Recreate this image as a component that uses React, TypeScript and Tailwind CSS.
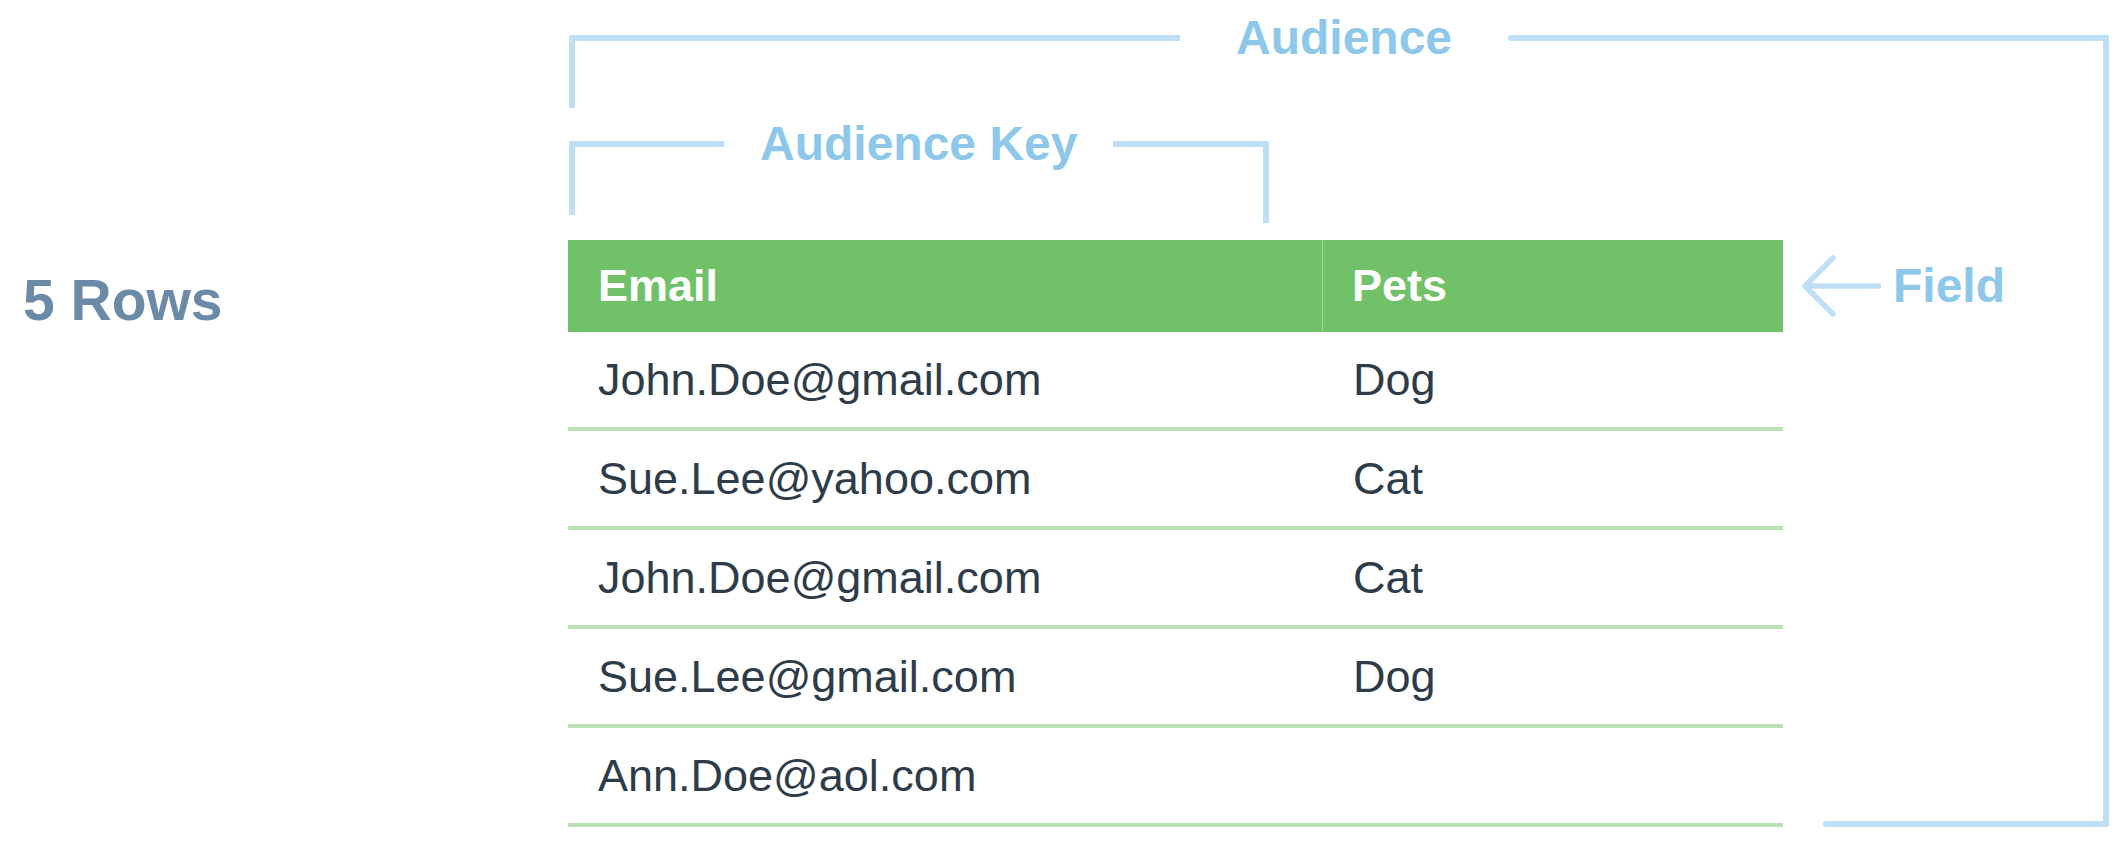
import { FunctionComponent } from "react";

const rows = [
  { email: "John.Doe@gmail.com", pet: "Dog" },
  { email: "Sue.Lee@yahoo.com", pet: "Cat" },
  { email: "John.Doe@gmail.com", pet: "Cat" },
  { email: "Sue.Lee@gmail.com", pet: "Dog" },
  { email: "Ann.Doe@aol.com", pet: "" },
];

const App: FunctionComponent = () => {
  return (
    <div className="w-full h-[842px] bg-white overflow-hidden flex flex-row items-start font-['Liberation_Sans',Arial,sans-serif]">
      {/* row count */}
      <div className="w-[568px] shrink-0 pt-[267px] pl-[23px]">
        <div className="text-[57px] leading-[66px] font-bold text-[#6a8aa8]">5 Rows</div>
      </div>

      {/* diagram */}
      <div className="flex flex-row items-start">
        <div className="w-[1535px] flex flex-col">
          {/* Audience bracket */}
          <div className="h-[108px] flex flex-row items-start">
            <div className="ml-[1px] mt-[35px] w-[611px] h-[73px] border-t-[6px] border-l-[6px] border-[#bfdff4] rounded-tl-[2px]" />
            <div className="mt-[10px] px-[56px] text-[48px] leading-[56px] font-bold text-[#8dc7ea]">Audience</div>
            <div className="mt-[35px] flex-1 h-[6px] bg-[#bfdff4] rounded-l-[3px]" />
          </div>

          {/* Audience Key bracket */}
          <div className="h-[132px] flex flex-row items-start">
            <div className="ml-[1px] mt-[33px] w-[155px] h-[74px] border-t-[6px] border-l-[6px] border-[#bfdff4] rounded-tl-[2px]" />
            <div className="mt-[8px] px-[36px] text-[48px] leading-[56px] font-bold text-[#8dc7ea]">Audience Key</div>
            <div className="mt-[33px] w-[156px] h-[82px] border-t-[6px] border-r-[6px] border-[#bfdff4] rounded-tr-[2px]" />
          </div>

          {/* table + field label */}
          <div className="flex flex-row items-stretch">
            <div className="w-[1215px] flex flex-col">
              <div className="h-[92px] flex flex-row bg-[#71c169] text-white font-bold text-[45px]">
                <div className="w-[755px] flex items-center pl-[30px] border-r border-[#a3d79e]">Email</div>
                <div className="flex-1 flex items-center pl-[29px]">Pets</div>
              </div>
              {rows.map((r, i) => (
                <div key={i} className="h-[99px] flex flex-row border-b-[4px] border-[#b9e1b3] text-[45px] text-[#2e3c49]">
                  <div className="w-[755px] flex items-center pl-[30px]">{r.email}</div>
                  <div className="flex-1 flex items-center pl-[30px]">{r.pet}</div>
                </div>
              ))}
            </div>

            <div className="flex-1 flex flex-col">
              <div className="h-[92px] flex flex-row items-center">
                <svg className="ml-[18px] w-[80px] h-[64px]" viewBox="0 0 80 64" fill="none">
                  <path
                    d="M32 4 L4 32 L32 60 M4 32 H78"
                    stroke="#bfdff4"
                    strokeWidth="5.5"
                    strokeLinecap="round"
                    strokeLinejoin="round"
                  />
                </svg>
                <div className="ml-[12px] text-[48px] leading-[56px] font-bold text-[#8dc7ea]">Field</div>
              </div>
              <div className="flex-1" />
              <div className="ml-[40px] h-[6px] bg-[#bfdff4] rounded-l-[3px]" />
            </div>
          </div>
        </div>

        {/* right rail of the Audience bracket */}
        <div className="mt-[35px] w-[6px] h-[792px] bg-[#bfdff4] rounded-r-[2px]" />
      </div>
    </div>
  );
};

export default App;
